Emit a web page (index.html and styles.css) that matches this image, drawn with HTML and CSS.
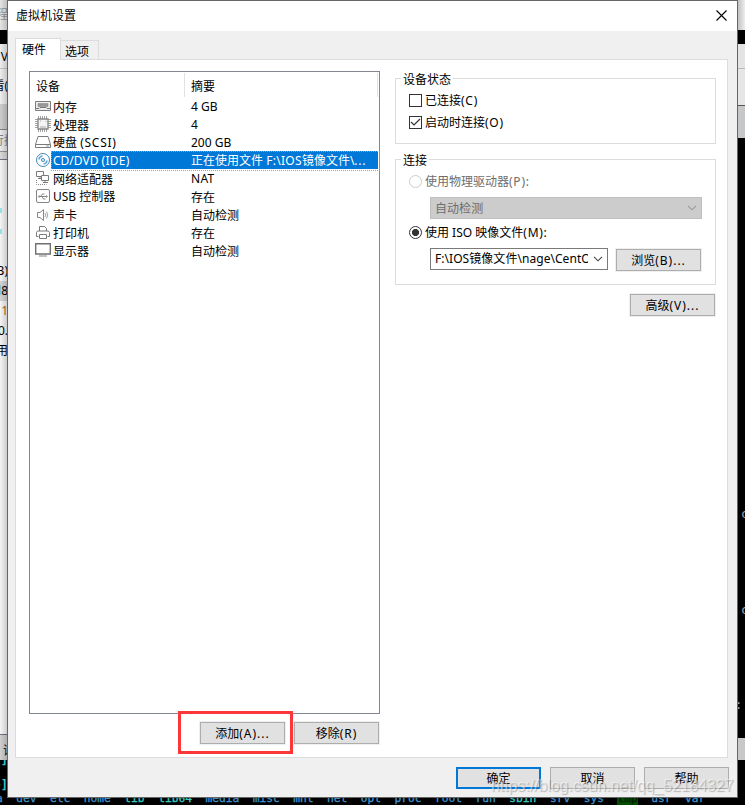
FILE: index.html
```html
<!DOCTYPE html>
<html lang="zh-CN">
<head>
<meta charset="utf-8">
<title>虚拟机设置</title>
<link rel="stylesheet" href="styles.css">
</head>
<body>
<div class="desktop">
  <div class="back back-left">
    <div class="b1">程</div>
    <div class="b2"></div>
    <div class="b3">V</div>
    <div class="b4">看(</div>
    <div class="b5"></div>
    <div class="b6">行控</div>
    <div class="b7"></div>
    <div class="b8"><i></i><i></i></div>
    <div class="b9">B)</div>
    <div class="b9 hl"><em>l</em>8</div>
    <div class="b9"><em class="one">1</em></div>
    <div class="b9">0.</div>
    <div class="b9">用</div>
    <div class="b10"></div>
    <div class="b11">请</div>
    <div class="b12"><span>]</span><span>~]</span></div>
  </div>
  <div class="back back-right">
    <div class="r1"></div><div class="r2"></div><div class="r3"></div><div class="r4"></div><div class="r5"></div>
    <div class="r6"><span class="c1">c</span><span class="c2">c</span><span class="c3">:</span></div>
    <div class="r7"></div><div class="r8"></div>
  </div>
  <pre class="console">a  dev  etc  home  <b>lib</b>  <b>lib64</b>  media  misc  mnt  net  opt  proc  root  run  <b>sbin</b>  srv  sys  <mark>tmp</mark>  usr  var</pre>

  <section class="dialog">
    <header class="titlebar">
      <span>虚拟机设置</span>
      <svg width="11" height="11" viewBox="0 0 11 11"><path d="M.5.5l10 10M10.5.5l-10 10" stroke="#000" stroke-width="1.1"/></svg>
    </header>
    <nav class="tabs"><span class="tab active">硬件</span><span class="tab">选项</span></nav>
    <main class="pane">
      <div class="left">
        <div class="list">
          <div class="head"><span>设备</span><span>摘要</span></div>
          <div class="row">
            <svg viewBox="0 0 16 18"><path d="M.5 4.5h15v9H.5z" fill="#eee" stroke="#7b7b7b"/><path d="M3 6.5h3v3H3zM6.5 6.5h3v3h-3zM10 6.5h3v3h-3z" fill="#999" stroke="#888" stroke-width=".6"/><path d="M1 11.5h3l1-1h6l1 1h3" fill="none" stroke="#777"/></svg>
            <span class="n z">内存</span><span>4 GB</span></div>
          <div class="row">
            <svg viewBox="0 0 16 18"><path d="M3.5 1v16M5.5 1v16M7.5 1v16M9.5 1v16M11.5 1v16M0 4.5h16M0 6.5h16M0 8.5h16M0 10.5h16M0 12.5h16" stroke="#999" stroke-width=".9"/><path d="M3 4h10v10H3z" fill="#f4f4f4" stroke="#858585" stroke-width="1.3"/><path d="M5 6h1M5 12h6M11 6v1" stroke="#aaa"/></svg>
            <span class="n z">处理器</span><span>4</span></div>
          <div class="row">
            <svg viewBox="0 0 16 18"><path d="M3 3.5h10l2.5 8v3H.5v-3zM.5 11.5h15" fill="#fff" stroke="#7b7b7b"/><path d="M11 13h3" stroke="#999"/></svg>
            <span class="n">硬盘 <s>(SCSI)</s></span><span>200 GB</span></div>
          <div class="row selected">
            <svg viewBox="0 0 16 18"><circle cx="8" cy="9" r="6.5" fill="#fff" stroke="#4389b8"/><circle cx="8" cy="9" r="1.6" fill="#d5eaf8" stroke="#4a91c1"/><path d="M4 8.5A4 4 0 0 1 7.5 5M8.5 13A4 4 0 0 0 12 9.5" fill="none" stroke="#62a8d4" stroke-width="1.6"/></svg>
            <span class="n">CD/DVD <s class="half">(IDE)</s></span><span>正在使用文件 <s class="half">F:\IOS</s>镜像文件\<s>...</s></span></div>
          <div class="row">
            <svg viewBox="0 0 16 18"><path d="M1.5 2.5h7v5h-7zM3 9.5h4M5 7.5v2" fill="#fff" stroke="#7b7b7b"/><path d="M6.5 6.5h7v5h-7zM10 11.5v2M8 13.5h5" fill="#fff" stroke="#7b7b7b"/><path d="M1.5 11v4.5h10" fill="none" stroke="#888" stroke-dasharray="1 1"/></svg>
            <span class="n z">网络适配器</span><span><s class="half">NAT</s></span></div>
          <div class="row">
            <svg viewBox="0 0 16 18"><rect x="1.5" y="2.5" width="13" height="13" rx="1.5" fill="#fff" stroke="#858585"/><path d="M4 9.5h8M5.500 9.500l2-2.500h2M7 9.500l1.500 2.500h2" fill="none" stroke="#777" stroke-width=".9"/><circle cx="4.200" cy="9.500" r="1.100" fill="#888"/><path d="M11 8l2 1.500-2 1.500z" fill="#888"/></svg>
            <span class="n">USB 控制器</span><span class="z">存在</span></div>
          <div class="row">
            <svg viewBox="0 0 16 18"><path d="M2.500 7.500H5l3.500-3v11L5 12.500H2.500z" fill="#fff" stroke="#888"/><path d="M10 8q1.500 2 0 4M11.500 6.500q2.500 3.500 0 7" fill="none" stroke="#999" stroke-width=".9"/></svg>
            <span class="n z">声卡</span><span class="z">自动检测</span></div>
          <div class="row">
            <svg viewBox="0 0 16 18"><path d="M4.500 8V3.500h5l2 2V8M3.500 13.500h-2v-4l1-1.500h11l1 1.500v4h-2M4.500 11.500h7v4h-7z" fill="#fff" stroke="#7b7b7b"/></svg>
            <span class="n z">打印机</span><span class="z">存在</span></div>
          <div class="row">
            <svg viewBox="0 0 16 18"><path d="M.7 2.700h14.600v10.300H.7z" fill="#fff" stroke="#707070" stroke-width="1.400"/><path d="M4 15h8" stroke="#858585"/></svg>
            <span class="n z">显示器</span><span class="z">自动检测</span></div>
        </div>
        <div class="actions">
          <button class="btn">添加<s>(A)...</s></button>
          <button class="btn">移除<s>(R)</s></button>
          <div class="marker"></div>
        </div>
      </div>
      <div class="right">
        <fieldset class="group status">
          <legend>设备状态</legend>
          <label><i class="check"></i>已连接<s>(C)</s></label>
          <label><i class="check"><svg width="11" height="11" viewBox="0 0 11 11"><path d="M1 5l3 3 6-6" fill="none" stroke="#333" stroke-width="1.200"/></svg></i>启动时连接<s>(O)</s></label>
        </fieldset>
        <fieldset class="group link">
          <legend>连接</legend>
          <label class="off"><i class="radio"></i>使用物理驱动器<s>(P):</s></label>
          <div class="combo disabled"><span>自动检测</span><svg width="10" height="6" viewBox="0 0 10 6"><path d="M1 .8l4 4 4-4" fill="none" stroke="#999" stroke-width="1.100"/></svg></div>
          <label><i class="radio on"></i>使用 ISO 映像文件<s>(M):</s></label>
          <div class="line">
            <div class="combo"><span>F:\IOS镜像文件\nage\CentOS</span><svg width="10" height="6" viewBox="0 0 10 6"><path d="M1 .8l4 4 4-4" fill="none" stroke="#444" stroke-width="1.100"/></svg></div>
            <button class="btn">浏览<s>(B)...</s></button>
          </div>
        </fieldset>
        <button class="btn advanced">高级<s>(V)...</s></button>
      </div>
    </main>
    <footer class="footer">
      <button class="btn primary">确定</button><button class="btn">取消</button><button class="btn">帮助</button>
    </footer>
  </section>
  <div class="watermark">https://blog.csdn.net/qq_52184327</div>
</div>
</body>
</html>
```
FILE: styles.css
```css
* { box-sizing: border-box; }
body {
  margin: 0;
  font: 12px/18px "Noto Sans", "Noto Sans CJK SC", sans-serif;
  color: #000;
}
/* slightly looser latin runs */
s { text-decoration: none; letter-spacing: .75px; }
s.half { letter-spacing: .3px; }
.desktop { position: relative; width: 745px; height: 805px; overflow: hidden; background: #000; }
.desktop svg { display: block; flex: none; }

/* windows behind the dialog */
.back { position: absolute; top: 0; width: 8px; height: 805px; overflow: hidden; white-space: nowrap; }
.back > div { overflow: hidden; flex: none; }
.back-left { left: 0; }
.back-left::after { content: ""; position: absolute; inset: 0 0 45px; background: linear-gradient(90deg, rgba(0,0,0,.04), rgba(0,0,0,.22)); }
.back-left > div { display: flex; justify-content: flex-end; }
.b1 { height: 30px; line-height: 30px; background: #eee; color: #999; }
.b2 { height: 14px; background: #000; }
.b3 { height: 25px; line-height: 25px; background: #f8f8f8; border-bottom: 1px solid #ccc; }
.b4 { height: 35px; line-height: 33px; background: #f8f8f8; }
.b5 { height: 26px; background: #d5d5d5; border-bottom: 1px solid #888; }
.b6 { height: 22px; line-height: 22px; background: #f4f4f4; color: #888; border-bottom: 1px solid #999; }
.back-left > .b6 { justify-content: flex-start; text-indent: -8px; }
.b7 { height: 8px; background: #e2e2e2; border-bottom: 1px solid #778; }
.b8 { height: 101px; background: #fff; }
.back-left > .b8 { flex-direction: column; align-items: flex-start; justify-content: flex-start; padding-top: 48px; gap: 16px; }
.b8 i { width: 2px; height: 5px; background: #9ff0f0; }
.b9 { height: 20px; line-height: 20px; background: #fff; }
.hl { background: #ddd; }
.b9 em { font-style: normal; color: #1979ca; }
.b9 .one { color: #b86a28; }
.b10 { height: 374px; background: #fff; border-bottom: 1px solid #778; }
.b11 { height: 25px; line-height: 31px; background: #d8d8d8; }
.back-left > .b11 { justify-content: flex-start; padding-left: 3px; }
.b12 { height: 45px; color: #32c7c7; font: bold 12px/24px "DejaVu Sans Mono", monospace; background: #000; }
.back-left > .b12 { flex-direction: column; justify-content: flex-start; align-items: flex-end; }
.b12 span:first-child { height: 13px; line-height: 0; }
.back-right { left: 737px; }
.r1 { height: 30px; background: linear-gradient(90deg, #bbb, #eee); }
.r2 { height: 14px; background: #000; }
.r3 { height: 25px; background: #e4e4e4; border-bottom: 1px solid #bbb; }
.r4 { height: 37px; background: #e6e6e6; border-bottom: 1px solid #555; }
.r5 { height: 32px; background: #c6c7c9; }
.r6 { height: 600px; background: #000; color: #aaa; font: 12px/14px "DejaVu Sans Mono", monospace; }
.r6 span { display: block; padding-left: 4px; }
.r6 .c1 { margin-top: 369px; }
.r6 .c2 { margin-top: 82px; }
.r6 .c3 { margin-top: 81px; padding-left: 0; margin-left: -2px; }
.r7 { height: 22px; background: #c8c8c8; }
.r8 { height: 45px; background: #000; }
.console {
  position: absolute; left: -4px; top: 792px; margin: 0;
  font: 11.220px/14px "DejaVu Sans Mono", monospace; color: #3c96d2; -webkit-text-stroke: .3px;
}
.console b { font-weight: normal; color: #34cfc4; }
.console mark { background: #004d00; color: #001a00; }

/* dialog */
.dialog {
  position: absolute; left: 7px; top: 0; width: 731px; height: 798px;
  display: flex; flex-direction: column;
  border: 1px solid #666; background: #f0f0f0;
}
.titlebar { height: 30px; padding: 0 10px 0 8px; display: flex; align-items: center; justify-content: space-between; background: #fff; }
.titlebar svg { margin-bottom: 2px; }
.tabs { height: 22px; margin: 7px 0 -1px 7px; display: flex; align-items: flex-end; position: relative; flex: none; }
.tab { height: 20px; width: 38px; padding-left: 4px; line-height: 21px; border: 1px solid #dcdcdc; border-left: 0; }
.tab.active { height: 22px; width: 46px; padding-left: 6px; border-left: 1px solid #dcdcdc; border-bottom: 0; background: #fff; line-height: 22px; }
.pane { width: 713px; height: 699px; margin-left: 7px; flex: none; display: flex; border: 1px solid #dcdcdc; background: #fff; padding: 11px 0 0 13px; }
.left { width: 351px; }
.list { height: 643px; border: 1px solid #828790; }
.head { height: 25px; display: flex; padding-top: 1px; line-height: 28px; }
.head span:first-child { width: 155px; padding-left: 6px; border-right: 1px solid #e2e2e2; }
.head span:last-child { width: 193px; padding-left: 6px; border-right: 1px solid #e2e2e2; }
.row { height: 18px; display: flex; padding-left: 5px; line-height: 20px; white-space: pre; }
.row svg { width: 16px; height: 18px; }
.row .n { width: 140px; padding-left: 2px; }
.row .z { line-height: 21px; }
.row.selected { color: #fff; background: linear-gradient(#0078d7, #0078d7) 21px 0 / 327px 18px no-repeat; position: relative; }
.row.selected::after { content: ""; position: absolute; left: 21px; top: 0; width: 327px; height: 18px; border: 1px dotted #ff8728; }
.actions { position: relative; display: flex; justify-content: flex-end; gap: 9px; padding: 8px 1px 0 0; }
.marker { position: absolute; left: 149px; top: -3px; width: 115px; height: 43px; border: 3px solid #fd3737; }
.btn { width: 85px; height: 22px; padding: 0; border: 1px solid #adadad; outline: 1px solid #efefef; background: #e1e1e1; font: inherit; line-height: 21px; color: #000; }
.btn s { letter-spacing: 1px; }
.right { width: 321px; margin-left: 15px; padding-top: 7px; display: flex; flex-direction: column; }
.group { position: relative; min-width: 0; margin: 0; border: 1px solid #dcdcdc; padding: 0 0 0 13px; }
.group legend { position: absolute; left: 5px; top: -8px; height: 18px; padding: 0 2px; background: #fff; }
.status { height: 66px; padding-top: 11px; }
.group label { display: flex; align-items: center; height: 22px; white-space: pre; }
.check, .radio { width: 13px; height: 13px; margin-right: 3px; border: 1px solid #333; background: #fff; }
.check { margin-bottom: 1px; }
.radio { border-radius: 50%; margin-bottom: 1px; }
.off { color: #6d6d6d; }
.off .radio { border-color: #ccc; }
.radio.on { background: radial-gradient(circle, #333 0 3.200px, #fff 3.900px); }
.link { height: 126px; margin-top: 15px; padding-top: 11px; }
.combo { display: flex; align-items: center; justify-content: space-between; width: 178px; height: 22px; padding: 0 4px; border: 1px solid #7a7a7a; }
.combo span { overflow: hidden; width: 153px; white-space: nowrap; line-height: 20px; letter-spacing: .05px; }
.combo.disabled { width: 272px; margin: 4px 0 3px 21px; background: #ccc; border-color: #bfbfbf; color: #6d6d6d; }
.combo.disabled span { padding-top: 2px; }
.line { display: flex; align-items: flex-start; gap: 8px; margin: 4px 0 0 21px; }
.line .btn { margin-top: 1px; }
.advanced { margin: 9px 0 0 235px; }
.footer { display: flex; justify-content: flex-end; gap: 9px; padding: 9px 8px 0 0; }
.footer .btn { line-height: 22px; outline: 0; }
.footer .primary { border: 2px solid #0078d7; line-height: 20px; }
.watermark { position: absolute; left: 491px; top: 776px; font: 15.800px/20px "Liberation Sans", sans-serif; color: rgba(255,255,255,.5); text-shadow: 1px 1px 1px rgba(90,90,90,.4); white-space: nowrap; }
```
